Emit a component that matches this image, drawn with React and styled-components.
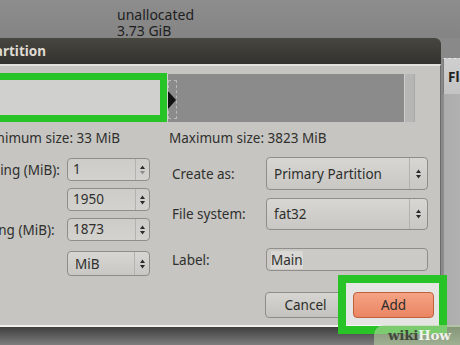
import React from 'react';
import styled, { createGlobalStyle } from 'styled-components';

// width of the dialog part that lies left of the visible crop
const OFF = 160;

const GlobalStyle = createGlobalStyle`
  html, body { margin: 0; padding: 0; }
  body { font-family: "Noto Sans", "DejaVu Sans", sans-serif; }
`;

const Page = styled.div`
  position: relative;
  width: 460px;
  height: 345px;
  overflow: hidden;
  display: flex;
  flex-direction: column;
  background: #898989;
  color: #2f2f2d;
  font-size: 13.5px;
`;

const Desktop = styled.div`
  flex: none;
  height: 38px;
  box-sizing: border-box;
  padding: 7px 0 0 117px;
  font-size: 14px;
  line-height: 16px;
  color: #1e1e1e;
  background: linear-gradient(#8d8d8d, #848484);
`;

const Middle = styled.div`
  flex: none;
  display: flex;
  height: 289px;
`;

const Dialog = styled.div`
  flex: none;
  width: ${441 + OFF}px;
  margin-left: -${OFF}px;
  display: flex;
  flex-direction: column;
`;

const TitleBar = styled.div`
  flex: none;
  height: 26px;
  display: flex;
  align-items: center;
  background: linear-gradient(#47463f, #33322e);
  border-top-right-radius: 6px;
  color: #dfdbd2;
  font-weight: bold;
  font-size: 13.5px;
`;

const Title = styled.span`
  width: ${OFF + 46}px;
  text-align: right;
  white-space: nowrap;
`;

const Body = styled.div`
  flex: 1;
  display: flex;
  flex-direction: column;
  padding: 8px 0 7px;
  background: #c6c5c1;
  border-top: 2px solid #e2e1dd;
  border-bottom: 2px solid #f0efec;
  border-right: 1px solid #6c6c6a;
`;

const Bar = styled.div`
  display: flex;
  height: 48px;
  margin-right: 25px;
  background: #8b8b8b;
`;

const NewPart = styled.div`
  width: ${OFF + 168}px;
  background: #d0d0cf;
`;

const Handle = styled.div`
  width: 9px;
  margin: 6px 0 3px;
  box-sizing: border-box;
  border: 1px dashed #b9b9b9;
  display: flex;
  align-items: center;
`;

const FreeSpace = styled.div`
  flex: 1;
`;

const EndStrip = styled.div`
  width: 11px;
  box-sizing: border-box;
  background: #b6b6b5;
  border-left: 1px solid #cfcfcf;
  border-right: 1px solid #a9a9a9;
`;

const SizeRow = styled.div`
  display: flex;
  margin-top: 8px;
  line-height: 16px;
  white-space: nowrap;
`;

const MinSize = styled.span`
  width: ${OFF + 120}px;
  text-align: right;
`;

const MaxSize = styled.span`
  margin-left: 49px;
`;

const Columns = styled.div`
  display: flex;
  align-items: flex-start;
  margin-top: 11px;
`;

const LeftGrid = styled.div`
  display: grid;
  width: ${OFF + 150}px;
  grid-template-columns: max-content 83px;
  justify-content: end;
  column-gap: 7px;
  row-gap: 7px;
  padding-top: 1px;
`;

const RightGrid = styled.div`
  display: grid;
  margin-left: 22px;
  grid-template-columns: 94px 162px;
  row-gap: 8px;
`;

const FieldLabel = styled.span`
  align-self: center;
  white-space: nowrap;
  margin-top: ${(p) => p.$top || 0}px;
`;

const SpinBox = styled.div`
  display: flex;
  height: 23px;
  box-sizing: border-box;
  border: 1px solid #8f8e8a;
  border-radius: 4px;
  background: linear-gradient(#cdccc8, #d3d2ce);
`;

const SpinValue = styled.span`
  flex: 1;
  padding-left: 5px;
  line-height: 21px;
`;

const ArrowSide = styled.span`
  width: ${(p) => p.$w}px;
  box-sizing: border-box;
  border-left: 1px solid #b3b2ae;
  display: flex;
  align-items: center;
  justify-content: center;
`;

const Combo = styled.div`
  display: flex;
  height: ${(p) => p.$h}px;
  margin-top: ${(p) => p.$top || 0}px;
  box-sizing: border-box;
  border: 1px solid #8e8d89;
  border-radius: 4px;
  background: linear-gradient(#d7d6d2, #c8c7c3);
`;

const ComboValue = styled.span`
  flex: 1;
  display: flex;
  align-items: center;
  padding-left: 7px;
`;

const Entry = styled.div`
  display: flex;
  align-items: center;
  height: 23px;
  margin-top: ${(p) => p.$top || 0}px;
  box-sizing: border-box;
  padding-left: 4px;
  border: 1px solid #8f8e8a;
  border-radius: 4px;
  background: #cbcac6;
`;

const Selected = styled.span`
  background: #d9d8d5;
`;

const ButtonRow = styled.div`
  display: flex;
  justify-content: flex-end;
  gap: 7px;
  margin: 16px 6px 0 0;
`;

const Button = styled.div`
  position: relative;
  z-index: ${(p) => (p.$primary ? 2 : 0)};
  width: 81px;
  height: 26px;
  box-sizing: border-box;
  display: flex;
  align-items: center;
  justify-content: center;
  border-radius: 4px;
  border: 1px solid ${(p) => (p.$primary ? '#c0603d' : '#8d8c88')};
  background: ${(p) =>
    p.$primary
      ? 'linear-gradient(#f5a384, #ea8563)'
      : 'linear-gradient(#d6d5d1, #c3c2be)'};
  color: #2c2c2a;
`;

const Side = styled.div`
  flex: 1;
  display: flex;
  flex-direction: column;
`;

const SideTop = styled.div`
  height: 20px;
  background: #898989;
`;

const HeaderCell = styled.div`
  height: 36px;
  box-sizing: border-box;
  margin-left: 2px;
  padding-left: 4px;
  display: flex;
  align-items: center;
  border-top: 1px dashed #e6e6e6;
  border-left: 1px solid #7c7c7c;
  background: linear-gradient(#cfcfcf, #c3c3c3);
  color: #1f1f1f;
  font-weight: bold;
  white-space: nowrap;
  overflow: hidden;
`;

const SideRest = styled.div`
  flex: 1;
  margin-left: 2px;
  border-left: 1px solid #8f8f8f;
  background: linear-gradient(90deg, #acacac, #b8b8b8);
`;

const Shadow = styled.div`
  flex: 1;
  background: linear-gradient(#3f3f3f, #7d7d7d);
`;

const Highlight = styled.div`
  position: absolute;
  box-sizing: border-box;
  border: ${(p) => p.$bw}px solid #27c327;
  background: ${(p) => (p.$lit ? 'rgba(255,255,255,0.55)' : 'transparent')};
  z-index: 1;
`;

const Watermark = styled.div`
  position: absolute;
  right: 0;
  bottom: 0;
  width: 86px;
  height: 20px;
  box-sizing: border-box;
  padding: 1px 0 0 14px;
  border-top-left-radius: 10px;
  background: rgba(180, 208, 160, 0.6);
  font-family: "DejaVu Serif", serif;
  font-weight: bold;
  font-size: 13.5px;
  line-height: 18px;
  letter-spacing: -0.3px;
  z-index: 3;
`;

const Wiki = styled.span`
  color: #3f4a3b;
`;

const How = styled.span`
  color: #eef2ea;
`;

const Arrows = ({ dimDown }) => (
  <svg width="7" height="12" viewBox="0 0 7 12">
    <path d="M3.5 1.5 L6 5 L1 5 Z" fill="#2a2a2a" />
    <path d="M1 7 L6 7 L3.5 10.5 Z" fill={dimDown ? '#8d8d8b' : '#2a2a2a'} />
  </svg>
);

const Spin = ({ value, dimDown }) => (
  <SpinBox>
    <SpinValue>{value}</SpinValue>
    <ArrowSide $w={14}>
      <Arrows dimDown={dimDown} />
    </ArrowSide>
  </SpinBox>
);

export default function App() {
  return (
    <Page>
      <GlobalStyle />
      <Desktop>
        <div>unallocated</div>
        <div>3.73 GiB</div>
      </Desktop>
      <Middle>
        <Dialog>
          <TitleBar>
            <Title>Create new Partition</Title>
          </TitleBar>
          <Body>
            <Bar>
              <NewPart />
              <Handle>
                <svg width="9" height="20" viewBox="0 0 9 20" style={{ marginLeft: -1 }}>
                  <path d="M0 0 L9 10 L0 20 Z" fill="#111" />
                </svg>
              </Handle>
              <FreeSpace />
              <EndStrip />
            </Bar>
            <SizeRow>
              <MinSize>Minimum size: 33 MiB</MinSize>
              <MaxSize>Maximum size: 3823 MiB</MaxSize>
            </SizeRow>
            <Columns>
              <LeftGrid>
                <FieldLabel>Free space preceding (MiB):</FieldLabel>
                <Spin value="1" dimDown />
                <FieldLabel>New size (MiB):</FieldLabel>
                <Spin value="1950" />
                <FieldLabel>Free space following (MiB):</FieldLabel>
                <Spin value="1873" />
                <FieldLabel $top={3}>Align to:</FieldLabel>
                <Combo $h={25} $top={3}>
                  <ComboValue>MiB</ComboValue>
                  <ArrowSide $w={15}>
                    <Arrows />
                  </ArrowSide>
                </Combo>
              </LeftGrid>
              <RightGrid>
                <FieldLabel>Create as:</FieldLabel>
                <Combo $h={33}>
                  <ComboValue>Primary Partition</ComboValue>
                  <ArrowSide $w={18}>
                    <Arrows />
                  </ArrowSide>
                </Combo>
                <FieldLabel>File system:</FieldLabel>
                <Combo $h={32}>
                  <ComboValue>fat32</ComboValue>
                  <ArrowSide $w={18}>
                    <Arrows />
                  </ArrowSide>
                </Combo>
                <FieldLabel $top={10}>Label:</FieldLabel>
                <Entry $top={10}>
                  <Selected>Main</Selected>
                </Entry>
              </RightGrid>
            </Columns>
            <ButtonRow>
              <Button>Cancel</Button>
              <Button $primary>Add</Button>
            </ButtonRow>
          </Body>
        </Dialog>
        <Side>
          <SideTop />
          <HeaderCell>Flags</HeaderCell>
          <SideRest />
        </Side>
      </Middle>
      <Shadow />
      <Highlight $bw={7} style={{ left: -10, top: 73, width: 177, height: 49 }} />
      <Highlight $bw={8} $lit style={{ left: 338, top: 275, width: 109, height: 59 }} />
      <Watermark>
        <Wiki>wiki</Wiki>
        <How>How</How>
      </Watermark>
    </Page>
  );
}
